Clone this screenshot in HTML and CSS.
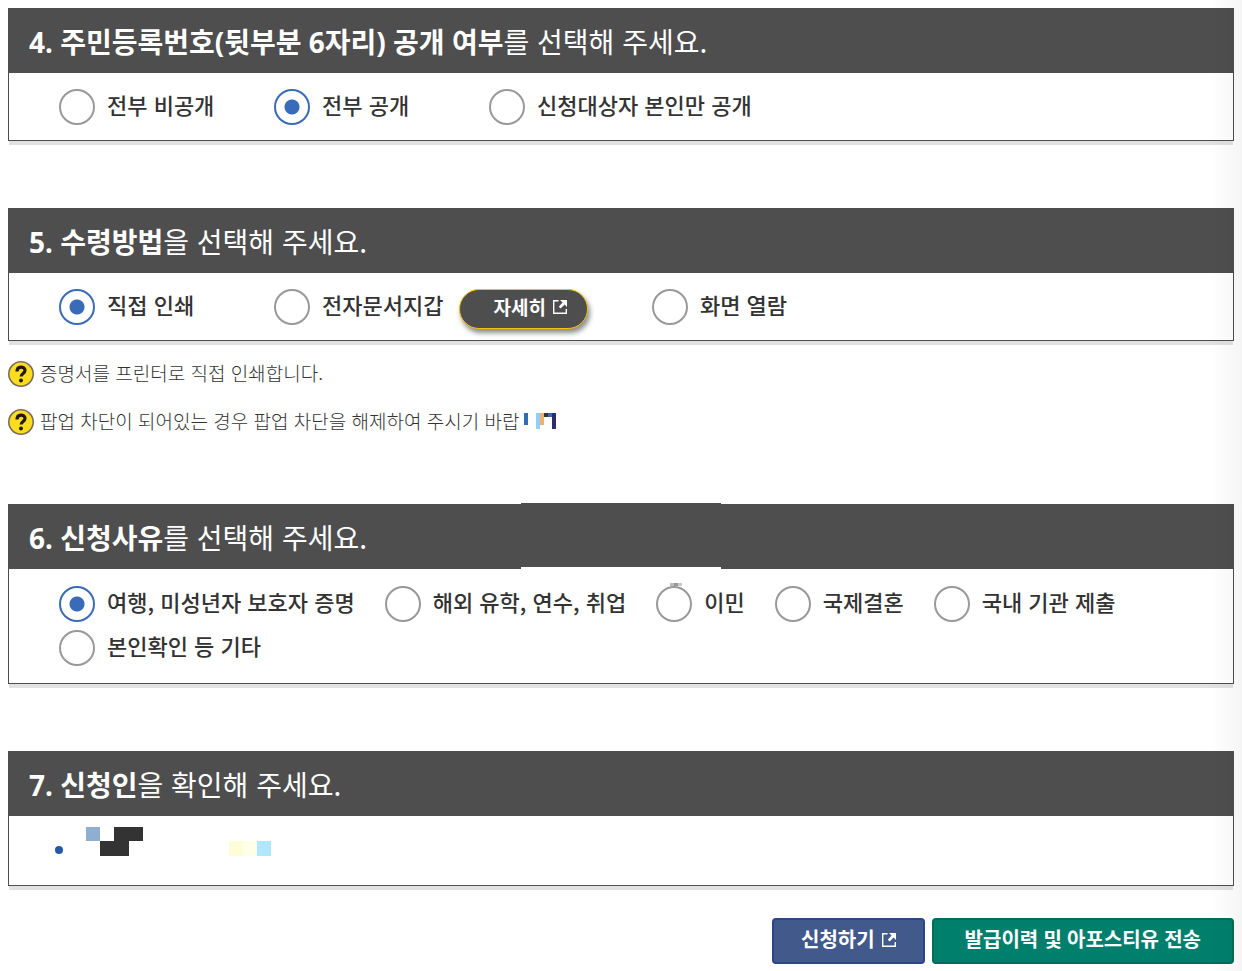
FILE: index.html
```html
<!DOCTYPE html>
<html lang="ko">
<head>
<meta charset="utf-8">
<meta name="viewport" content="width=device-width, initial-scale=1">
<title>증명서 신청</title>
<link rel="stylesheet" href="styles.css">
</head>
<body>
<form class="page">
  <section class="panel" aria-labelledby="t4">
    <h2 class="panel-title" id="t4"><strong>4. 주민등록번호(뒷부분 6자리) 공개 여부</strong>를 선택해 주세요.</h2>
    <div class="options options-columns">
      <label class="option"><input type="radio" name="disclose"><span>전부 비공개</span></label>
      <label class="option"><input type="radio" name="disclose" checked><span>전부 공개</span></label>
      <label class="option"><input type="radio" name="disclose"><span>신청대상자 본인만 공개</span></label>
    </div>
  </section>

  <section class="panel panel-noted" aria-labelledby="t5">
    <h2 class="panel-title" id="t5"><strong>5. 수령방법</strong>을 선택해 주세요.</h2>
    <div class="options options-columns">
      <label class="option"><input type="radio" name="receive" checked><span>직접 인쇄</span></label>
      <div class="option-group">
        <label class="option"><input type="radio" name="receive"><span>전자문서지갑</span></label>
        <button type="button" class="detail">자세히
          <svg class="external" viewBox="0 0 14 14" aria-hidden="true"><path d="M5.500 .700H.700v12.600h12.600V9" fill="none" stroke="currentColor" stroke-width="1.400"/><path d="M7 0h7v7l-2.400-2.400L7.600 8.600 5.800 6.800l3.800-4.200z" fill="currentColor"/></svg>
        </button>
      </div>
      <label class="option"><input type="radio" name="receive"><span>화면 열람</span></label>
    </div>
  </section>
  <ul class="notes">
    <li class="note">
      <svg class="help" viewBox="0 0 26 26" aria-hidden="true"><circle cx="13" cy="13" r="12.200" fill="#ffdc1e" stroke="#77705a" stroke-width="1.600"/><path d="M9 10.400c0-5.600 8-5.400 8-1 0 3-3.900 3-3.900 6.200" fill="none" stroke="#1c1a05" stroke-width="3.200"/><circle cx="13" cy="19.600" r="2" fill="#1c1a05"/></svg>
      <span>증명서를 프린터로 직접 인쇄합니다.</span>
    </li>
    <li class="note">
      <svg class="help" viewBox="0 0 26 26" aria-hidden="true"><circle cx="13" cy="13" r="12.200" fill="#ffdc1e" stroke="#77705a" stroke-width="1.600"/><path d="M9 10.400c0-5.600 8-5.400 8-1 0 3-3.900 3-3.900 6.200" fill="none" stroke="#1c1a05" stroke-width="3.200"/><circle cx="13" cy="19.600" r="2" fill="#1c1a05"/></svg>
      <span>팝업 차단이 되어있는 경우 팝업 차단을 해제하여 주시기 바랍<svg class="fragment" viewBox="0 0 32 16" shape-rendering="crispEdges" aria-hidden="true"><path fill="#2f6db3" d="M0 0h4v12H0zM24 0h4v4h-4z"/><path fill="#8dcfff" d="M12 0h4v16h-4z"/><path fill="#efb06d" d="M16 0h4v12h-4z"/><path fill="#333" d="M20 0h4v4h-4z"/><path fill="#2d2d6b" d="M28 0h4v16h-4z"/></svg></span>
    </li>
  </ul>

  <section class="panel" aria-labelledby="t6">
    <h2 class="panel-title panel-title-patched" id="t6"><strong>6. 신청사유</strong>를 선택해 주세요.</h2>
    <div class="options options-wrapped">
      <label class="option"><input type="radio" name="reason" checked><span>여행, 미성년자 보호자 증명</span></label>
      <label class="option"><input type="radio" name="reason"><span>해외 유학, 연수, 취업</span></label>
      <label class="option option-capped"><input type="radio" name="reason"><span>이민</span></label>
      <label class="option"><input type="radio" name="reason"><span>국제결혼</span></label>
      <label class="option"><input type="radio" name="reason"><span>국내 기관 제출</span></label>
      <label class="option"><input type="radio" name="reason"><span>본인확인 등 기타</span></label>
    </div>
  </section>

  <section class="panel" aria-labelledby="t7">
    <h2 class="panel-title" id="t7"><strong>7. 신청인</strong>을 확인해 주세요.</h2>
    <ul class="applicant">
      <li class="applicant-row">
        <svg class="mosaic" viewBox="0 0 185 29" shape-rendering="crispEdges" aria-hidden="true"><path fill="#8fafd2" d="M0 0h14v14H0z"/><path fill="#333" d="M28 0h29v14H28zM14 14h29v15H14z"/><path fill="#fffcd8" d="M143 14h14v15h-14z"/><path fill="#fffee8" d="M157 14h14v15h-14z"/><path fill="#aee7ff" d="M171 14h14v15h-14z"/></svg>
      </li>
    </ul>
  </section>

  <div class="actions">
    <button type="submit" class="action action-apply">신청하기
      <svg class="external" viewBox="0 0 14 14" aria-hidden="true"><path d="M5.500 .700H.700v12.600h12.600V9" fill="none" stroke="currentColor" stroke-width="1.400"/><path d="M7 0h7v7l-2.400-2.400L7.600 8.600 5.800 6.800l3.800-4.200z" fill="currentColor"/></svg>
    </button>
    <button type="button" class="action action-send">발급이력 및 아포스티유 전송</button>
  </div>
</form>
</body>
</html>
```

FILE: styles.css
```css
* { box-sizing: border-box; }

body {
  margin: 0;
  background: #fff;
  color: #333;
  font-family: "Noto Sans CJK KR", sans-serif;
}

.page {
  position: relative;
  padding: 8px 8px 7px;
}

/* soft shade along the right edge */
.page::after {
  content: "";
  position: absolute;
  top: 0;
  right: 0;
  bottom: 0;
  width: 32px;
  background: linear-gradient(to right, rgba(0, 0, 0, 0), rgba(0, 0, 0, .04));
  pointer-events: none;
}

.panel {
  margin-bottom: 67px;
  border: 1px solid #4e4e4e;
  box-shadow: 0 5px 0 -1px #e1e1e1;
}

.panel-noted { margin-bottom: 20px; }

.panel-title {
  position: relative;
  margin: 0;
  padding: 12px 20px;
  background: #4e4e4e;
  color: #fff;
  font-size: 28px;
  font-weight: 400;
  line-height: 40px;
}

.panel-title strong {
  font-family: "Noto Sans", "Noto Sans CJK KR", sans-serif;
  font-weight: 700;
  line-height: 1;
}

.panel-title-patched::after {
  content: "";
  position: absolute;
  top: -2px;
  left: 512px;
  width: 200px;
  height: 64px;
  border-bottom: 3px solid #fff;
  background: #4e4e4e;
}

.options {
  display: flex;
  flex-wrap: wrap;
  padding: 16px 50px 15px;
}

.options-columns > * { min-width: 215px; }

.options-wrapped {
  gap: 8px 30px;
  padding-top: 17px;
  padding-bottom: 17px;
}

.option {
  position: relative;
  display: flex;
  align-items: center;
  gap: 12px;
  font-size: 22px;
  font-weight: 500;
  line-height: 28px;
}

.option span { padding-bottom: 7px; }

.option input {
  appearance: none;
  flex: none;
  width: 36px;
  height: 36px;
  margin: 0;
  border: 2px solid #999;
  border-radius: 50%;
  background: #fff;
}

.option input:checked {
  border-color: #3a6bb9;
  background: radial-gradient(circle, #3a6bb9 7px, #fff 8px);
}

.option-capped::before {
  content: "";
  position: absolute;
  top: -3px;
  left: 14px;
  width: 12px;
  height: 3px;
  background: linear-gradient(to right, #bbb 4px, #999 4px 8px, #ccc 8px);
}

.option-group {
  display: flex;
  align-items: flex-start;
  gap: 16px;
  margin-right: 64px;
}

.detail {
  display: flex;
  align-items: center;
  gap: 7px;
  height: 40px;
  margin: 0 0 -4px;
  padding: 0 20px 4px 33px;
  border: 1px solid #f5c400;
  border-radius: 20px;
  background: #4e4e4e;
  box-shadow: 2px 4px 5px rgba(0, 0, 0, .45);
  color: #fff;
  font: 700 19px/28px "Noto Sans CJK KR", sans-serif;
}

.external {
  flex: none;
  width: 14px;
  height: 14px;
}

.notes {
  display: grid;
  gap: 22px;
  margin: 0 0 69px;
  padding: 0;
  list-style: none;
}

.note {
  display: flex;
  align-items: center;
  gap: 6px;
  height: 26px;
  font-size: 19px;
  font-weight: 300;
  line-height: 26px;
}

.note > span { padding-bottom: 2px; }

.help {
  flex: none;
  width: 26px;
  height: 26px;
}

.fragment {
  width: 32px;
  height: 16px;
  margin-left: 4px;
}

.applicant {
  margin: 0;
  padding: 11px 46px 29px;
  list-style: none;
}

.applicant-row {
  display: flex;
  align-items: flex-end;
  gap: 23px;
}

.applicant-row::before {
  content: "";
  width: 8px;
  height: 8px;
  margin-bottom: 2px;
  border-radius: 50%;
  background: #2458a8;
}

.mosaic {
  width: 185px;
  height: 29px;
}

.actions {
  display: flex;
  flex-wrap: wrap;
  justify-content: flex-end;
  gap: 7px;
  margin-top: -35px;
}

.action {
  display: flex;
  align-items: center;
  gap: 7px;
  height: 46px;
  padding: 0 27px 2px;
  border: 2px solid;
  border-radius: 4px;
  color: #fff;
  font: 700 20px/30px "Noto Sans", "Noto Sans CJK KR", sans-serif;
}

.action-apply {
  border-color: #2a4684;
  background: #415a8b;
}

.action-send {
  padding-right: 31px;
  padding-left: 31px;
  border-color: #046b58;
  background: #007f6d;
}
```
